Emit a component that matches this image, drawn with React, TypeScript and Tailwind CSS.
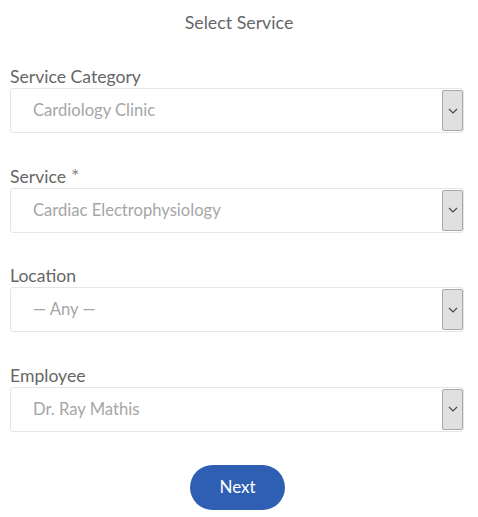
import { useState } from 'react';

const fields = [
  { label: 'Service Category', value: 'Cardiology Clinic', required: false },
  { label: 'Service', value: 'Cardiac Electrophysiology', required: true },
  { label: 'Location', value: '— Any —', required: false },
  { label: 'Employee', value: 'Dr. Ray Mathis', required: false },
];

function Chevron() {
  return (
    <svg width="10" height="6" viewBox="0 0 10 6" fill="none">
      <path d="M1 1l4 4 4-4" stroke="#444" strokeWidth="1.1" />
    </svg>
  );
}

export default function App() {
  const [values] = useState(fields.map(f => f.value));

  return (
    <div className="w-[478px] h-[517px] bg-white px-[10px] font-['Lato','Open_Sans',sans-serif] font-light">
      <h1 className="pt-[11px] text-center text-[17.8px] leading-[22px] text-[#666] font-normal">Select Service</h1>

      <div className="mt-[33px] flex flex-col gap-[32.5px]">
        {fields.map((f, i) => (
          <div key={f.label}>
            <label className="block h-[22px] text-[17.6px] leading-[22px] text-[#666] font-normal">
              {f.label}
              {f.required && <span className="ml-[5px] text-[20px] leading-[14px] text-[#888]">*</span>}
            </label>
            <div className="flex h-[45px] w-[454px] items-stretch rounded-[3px] border border-[#e6e6e6]">
              <div className="flex flex-1 items-center pl-[22px] text-[16.6px] text-[#a6a6a6] font-normal">{values[i]}</div>
              <div className="my-[1px] flex w-[21px] items-center justify-center rounded-[2px] border border-[#a8a8a8] bg-[#e0e0e0]">
                <Chevron />
              </div>
            </div>
          </div>
        ))}
      </div>

      <div className="mt-[33px] flex justify-center pr-[3px]">
        <button className="h-[45px] w-[95px] rounded-full bg-[#2f5fb3] text-[17px] font-normal text-white">Next</button>
      </div>
    </div>
  );
}
